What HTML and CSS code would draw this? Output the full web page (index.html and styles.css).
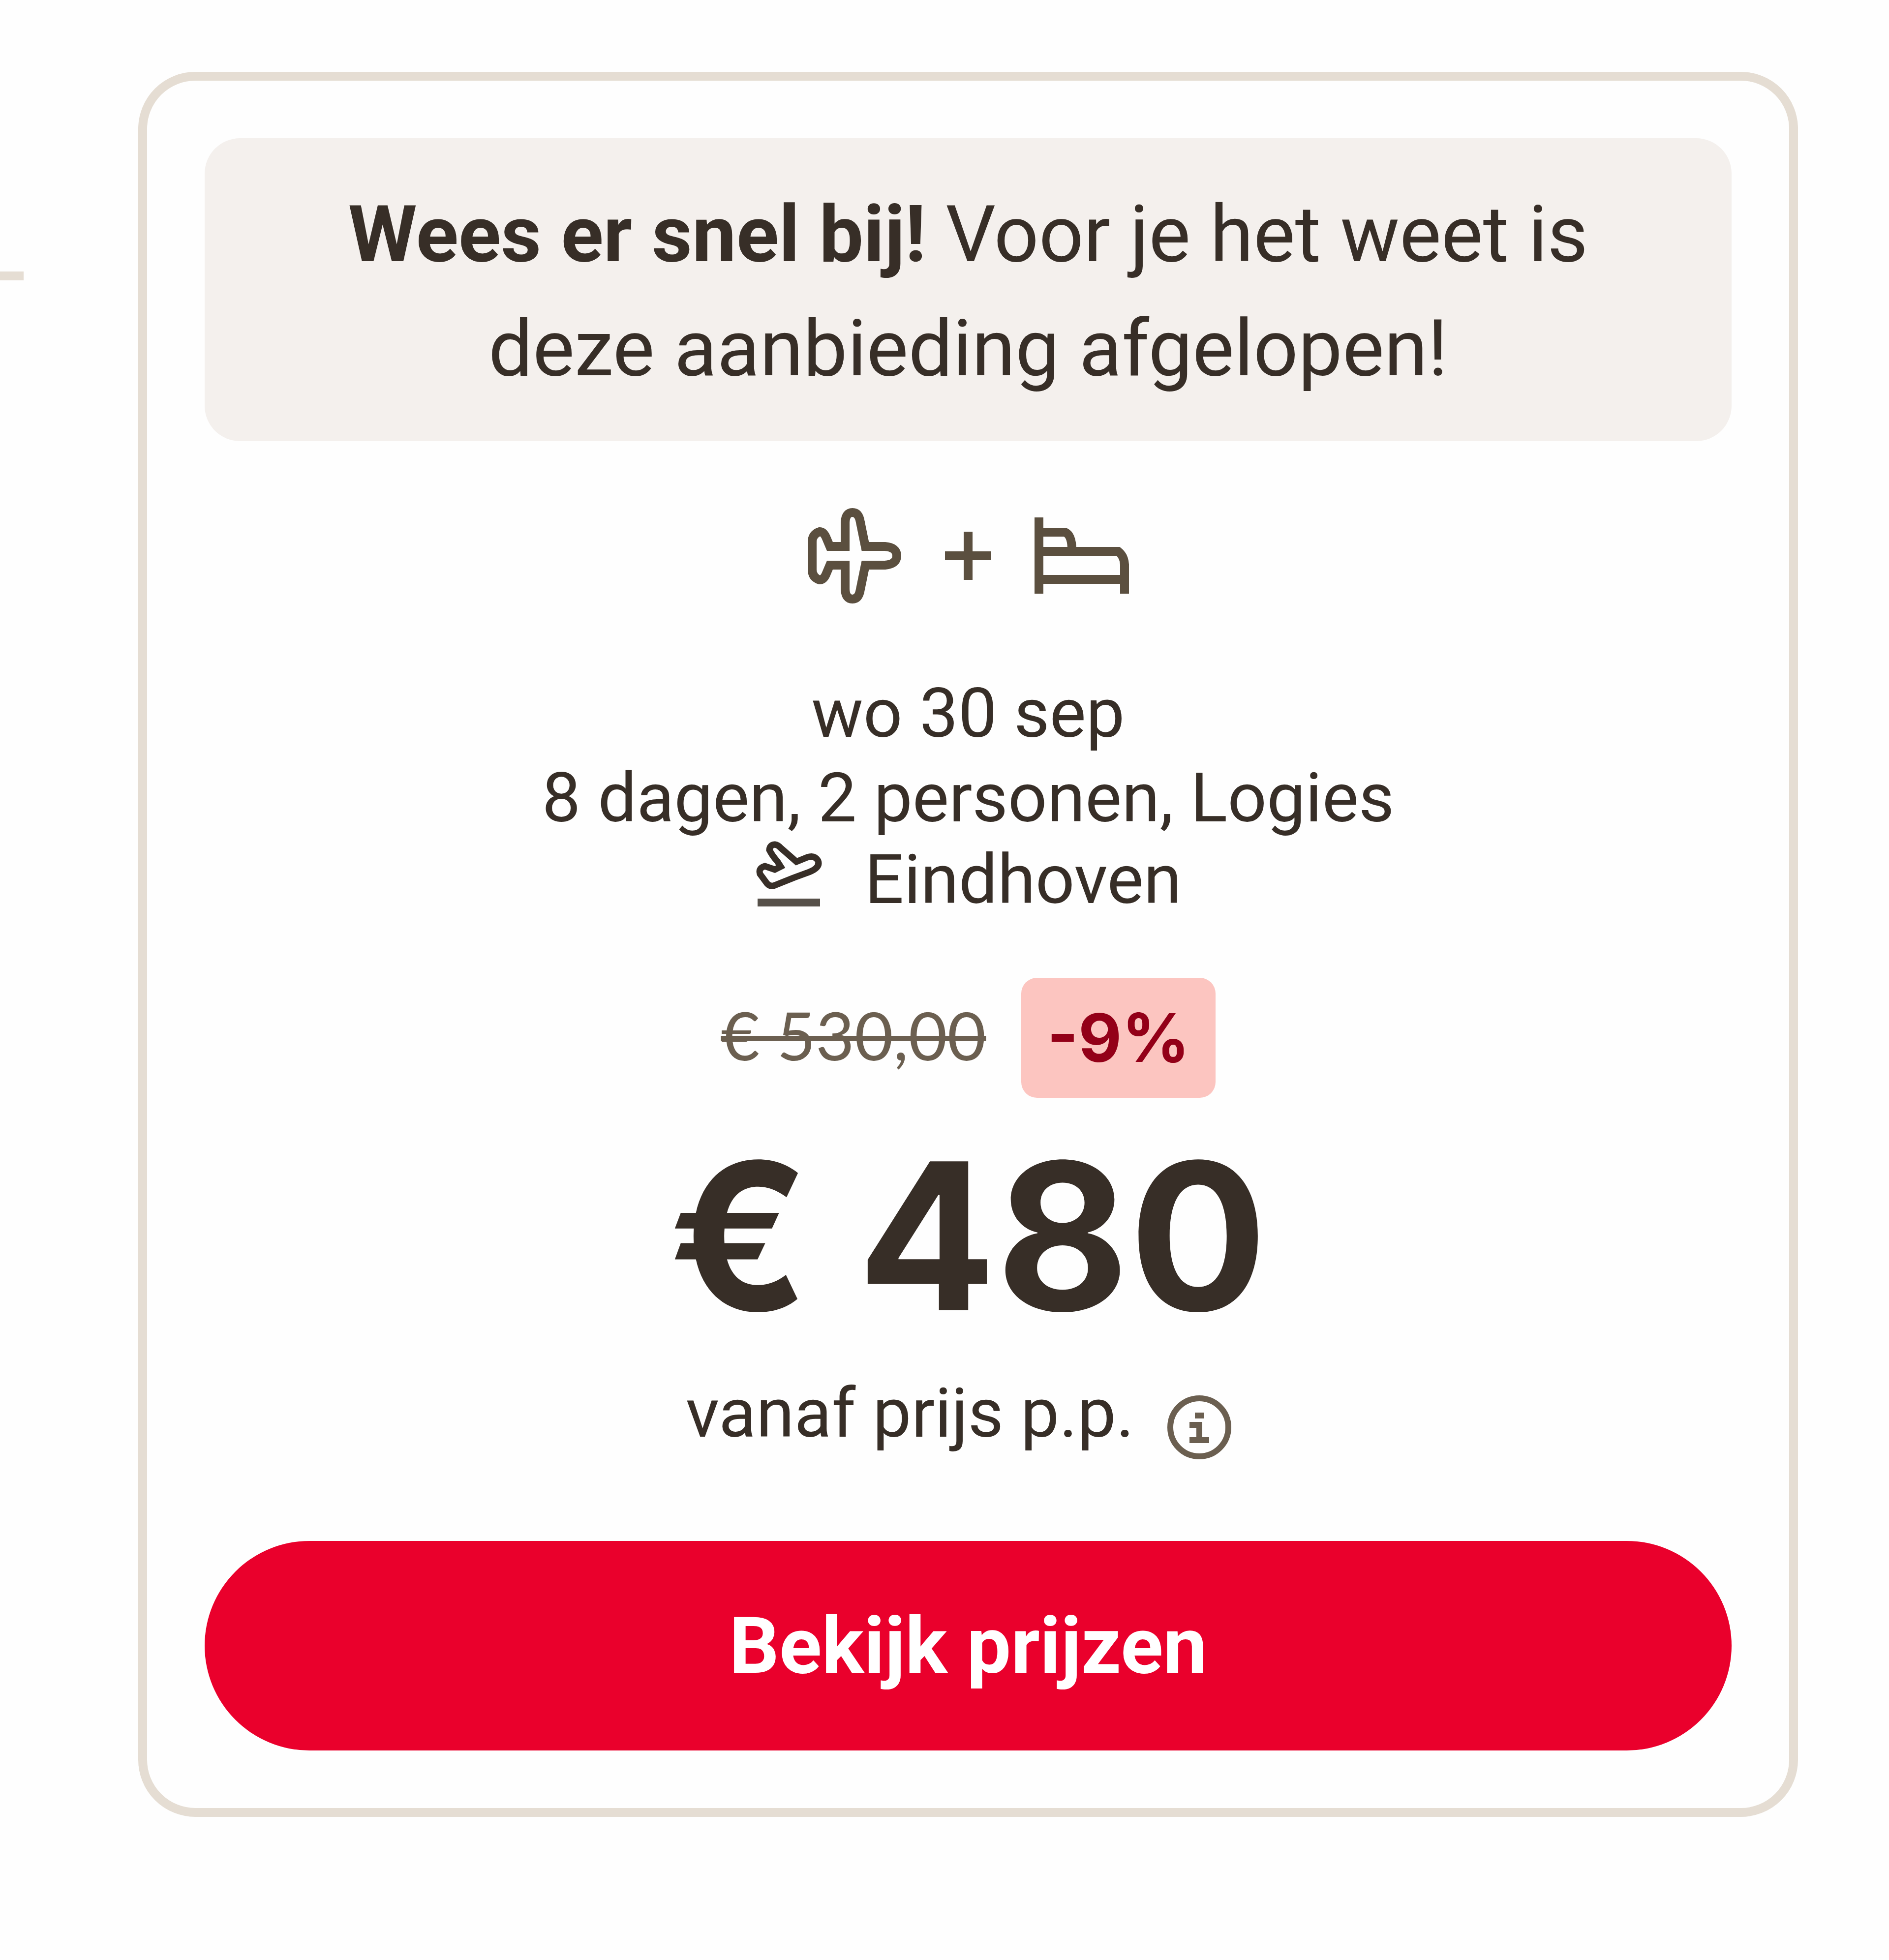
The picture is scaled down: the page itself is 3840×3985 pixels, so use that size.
FILE: index.html
```html
<!DOCTYPE html>
<html lang="nl">
<head>
<meta charset="utf-8">
<meta name="viewport" content="width=device-width, initial-scale=1">
<title>Aanbieding</title>
<link rel="stylesheet" href="styles.css">
</head>
<body>
<main class="page">
  <hr class="divider">
  <article class="card">
    <p class="notice"><strong>Wees er snel bij!</strong> Voor je het weet is deze aanbieding afgelopen!</p>

    <div class="package">
      <svg class="icon" viewBox="0 0 208 208" role="img" aria-label="Vlucht">
        <path d="M85 85V36Q86 16 100 16Q113 16 116 36L126 85H166Q190 87 190 104Q190 121 166 123H126L116 172Q113 192 100 192Q86 192 85 172V123H54L46 142Q41 153 33 153Q18 148 18 132V76Q18 60 33 55Q41 55 46 66L54 85Z"/>
      </svg>
      <svg class="icon icon-plus" viewBox="0 0 104 208" role="img" aria-label="plus">
        <path d="M5 104H99M52 55V153"/>
      </svg>
      <svg class="icon" viewBox="0 0 208 208" role="img" aria-label="Verblijf">
        <path d="M17 26V181M17 56H70Q84 62 84 92M17 95H178Q190 104 191 122V181M17 152H191"/>
      </svg>
    </div>

    <div class="details">
      <p class="line">wo 30 sep</p>
      <p class="line">8 dagen, 2 personen, Logies</p>
      <p class="departure">
        <svg class="icon icon-small" viewBox="0 0 138 138" aria-hidden="true">
          <path d="M30 20Q31 10 41 9Q48 10 53 16L85 44L107 35Q122 30 129 42Q134 56 111 65L81 76L41 92Q32 96 25 88L11 69Q7 57 21 53L41 60L53 54L46 43Q36 32 30 20Z"/>
          <path class="runway" d="M6 127H133"/>
        </svg>
        <span>Eindhoven</span>
      </p>
    </div>

    <div class="discount">
      <s class="old-price">€ 530,00</s>
      <span class="badge">-9%</span>
    </div>

    <p class="price">€ 480</p>

    <div class="per-person">
      <span class="per-person-text">vanaf prijs p.p.</span>
      <button class="info" type="button" aria-label="Meer informatie over de prijs">
        <svg class="icon icon-info" viewBox="0 0 138 138" aria-hidden="true">
          <circle cx="69" cy="69" r="59"/>
          <path d="M60 45H78M49 64H69V95M49 95H89"/>
        </svg>
      </button>
    </div>

    <button class="cta" type="button">Bekijk prijzen</button>
  </article>
</main>
</body>
</html>
```
FILE: styles.css
```css
* {
  box-sizing: border-box;
}

body {
  margin: 0;
  background: #fefefe;
  color: #372e27;
  font-family: Roboto, "Liberation Sans", sans-serif;
  font-size: 140px;
}

p {
  margin: 0;
}

.page {
  display: flex;
  align-items: flex-start;
  gap: 233px;
  padding: 146px 185px 290px 0;
}

.divider {
  flex: none;
  width: 48px;
  height: 18px;
  margin: 406px 0 0;
  border: 0;
  background: #e5ddd3;
}

.card {
  flex: 1;
  display: flex;
  flex-direction: column;
  padding: 117px;
  border: 18px solid #e5ddd3;
  border-radius: 116px;
  text-align: center;
}

.notice {
  padding: 80px 240px 72px;
  border-radius: 72px;
  background: #f4f0ed;
  font-size: 160px;
  line-height: 232px;
}

.package {
  display: flex;
  justify-content: center;
  gap: 75px;
  margin-top: 129px;
}

.icon {
  flex: none;
  width: 208px;
  height: 208px;
  fill: none;
  stroke: #5b4f3f;
  stroke-width: 18;
}

.icon-plus {
  width: 104px;
}

.details {
  margin-top: 130px;
}

.line {
  line-height: 172px;
}

.departure {
  display: flex;
  justify-content: center;
  gap: 86px;
  line-height: 160px;
}

.icon-small {
  width: 138px;
  height: 138px;
  stroke: #372e27;
  stroke-width: 13;
}

.runway {
  stroke: #565049;
  stroke-width: 16;
}

.discount {
  display: flex;
  justify-content: center;
  align-items: flex-start;
  gap: 72px;
  margin-top: 120px;
}

.old-price {
  color: #6b5f50;
  font-family: Lato, sans-serif;
  font-size: 136px;
  line-height: 232px;
  text-decoration-thickness: 10px;
}

.badge {
  padding: 0 52px;
  border-radius: 32px;
  background: #fcc5c0;
  color: #930018;
  font-family: Inter, sans-serif;
  font-size: 136px;
  font-weight: 700;
  line-height: 244px;
}

.price {
  margin: 36px 0 40px;
  font-family: Inter, sans-serif;
  font-size: 416px;
  font-weight: 700;
  line-height: 490px;
}

.per-person {
  display: flex;
  justify-content: center;
  gap: 28px;
}

.per-person-text {
  line-height: 150px;
}

.info {
  display: grid;
  place-items: center;
  width: 208px;
  height: 208px;
  padding: 0;
  border: 0;
  background: none;
  cursor: pointer;
}

.icon-info {
  width: 138px;
  height: 138px;
  stroke: #6b5f50;
  stroke-width: 12;
}

.cta {
  height: 426px;
  margin-top: 127px;
  border: 0;
  border-radius: 213px;
  background: #ea002c;
  color: #fff;
  font: 700 160px Roboto, "Liberation Sans", sans-serif;
  cursor: pointer;
}
```
